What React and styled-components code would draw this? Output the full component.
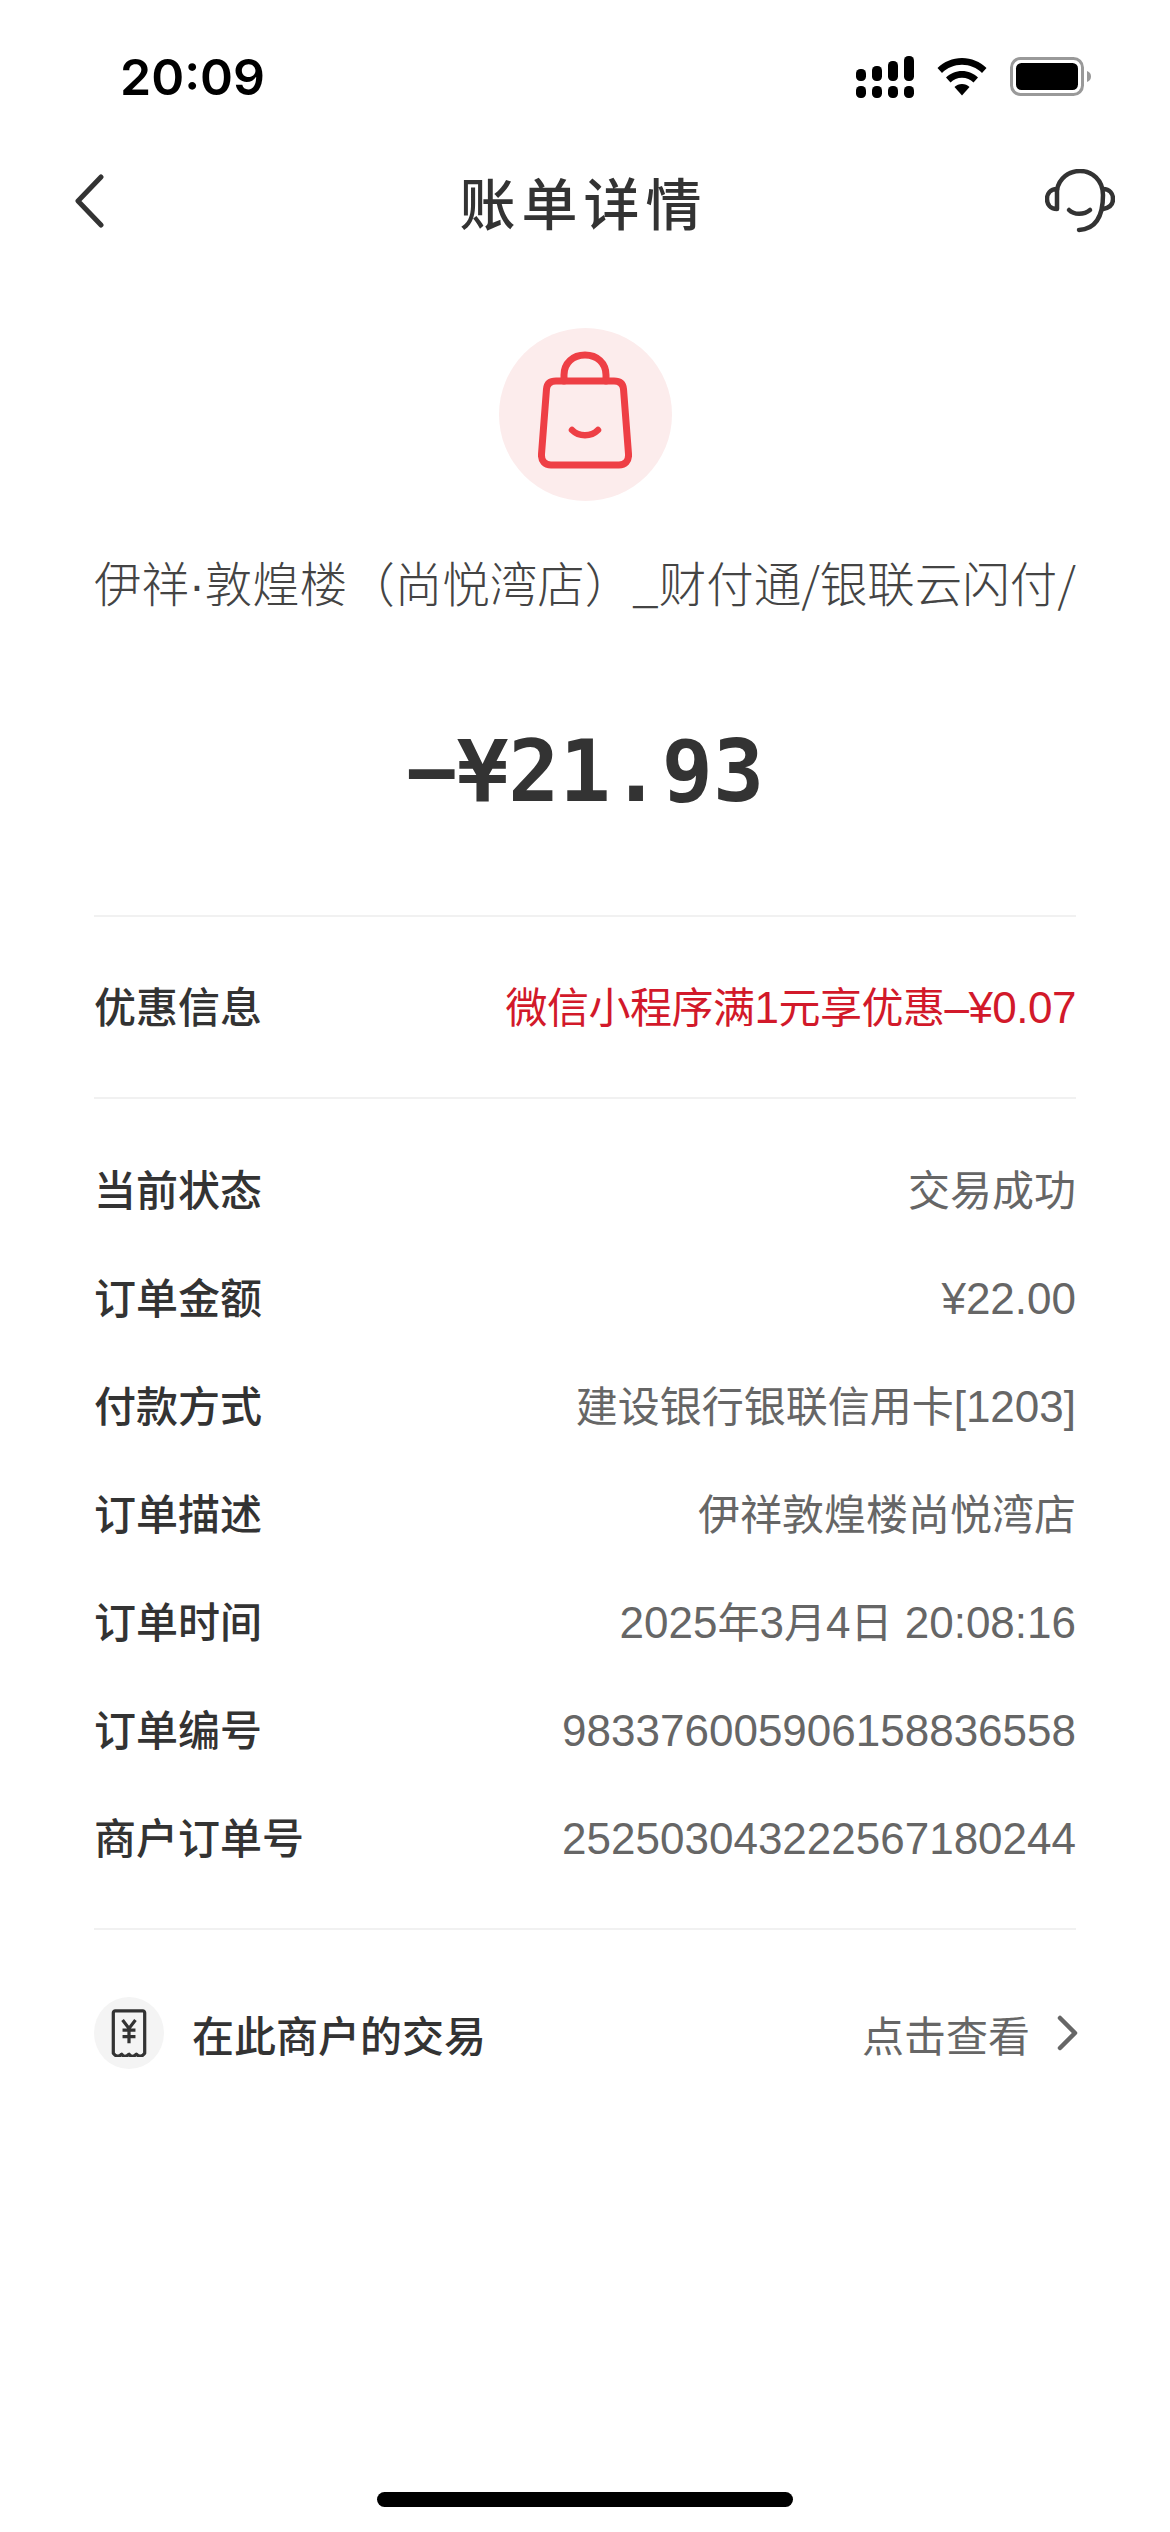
import React from "react";
import styled, { createGlobalStyle } from "styled-components";

const GlobalStyle = createGlobalStyle`
    html, body {
        margin: 0;
        padding: 0;
        background: #fff;
    }
    * {
        box-sizing: border-box;
    }
`;

const CJK = `"Noto Sans CJK SC", "Noto Sans", sans-serif`;

const Page = styled.div`
    width: 1170px;
    height: 2532px;
    background: #fff;
    font-family: ${CJK};
    color: #333;
    overflow: hidden;
    display: flex;
    flex-direction: column;
`;

const StatusBar = styled.div`
    height: 96px;
    padding: 58px 78px 0 120px;
    display: flex;
    align-items: center;
    justify-content: space-between;
`;

const Time = styled.span`
    font-family: Inter, "Liberation Sans", sans-serif;
    font-size: 50px;
    font-weight: 600;
    color: #000;
    line-height: 58px;
`;

const StatusIcons = styled.div`
    display: flex;
    align-items: center;
    gap: 23px;
`;

const NavBar = styled.div`
    height: 126px;
    margin-top: 42px;
    padding: 0 55px 0 74px;
    display: flex;
    align-items: center;
    justify-content: space-between;
`;

const NavTitle = styled.h1`
    margin: 0 0 0 18px;
    font-size: 56px;
    font-weight: 500;
    letter-spacing: 6px;
    line-height: 70px;
    color: #333;
`;

const Hero = styled.div`
    padding: 64px 94px 0;
    display: flex;
    flex-direction: column;
    align-items: center;
`;

const IconCircle = styled.div`
    width: 173px;
    height: 173px;
    padding-bottom: 9px;
    border-radius: 50%;
    background: #fcecec;
    display: flex;
    align-items: center;
    justify-content: center;
`;

const Merchant = styled.div`
    width: 100%;
    height: 72px;
    margin-top: 45px;
    font-size: 47.5px;
    font-weight: 200;
    line-height: 72px;
    color: #444;
    white-space: nowrap;
    overflow: hidden;
`;

const MerchantDot = styled.span`
    font-family: "Liberation Sans", sans-serif;
`;

const Amount = styled.div`
    margin-top: 104px;
    font-family: "DejaVu Sans Mono", monospace;
    font-size: 85px;
    font-weight: 700;
    line-height: 100px;
    color: #333;
`;

const Body = styled.div`
    padding: 0 94px 0;
`;

const Divider = styled.div`
    height: 2px;
    background: #f1f1f1;
    margin-top: ${p => p.$top}px;
`;

const Row = styled.div`
    height: 108px;
    margin-top: ${p => p.$top || 0}px;
    display: flex;
    align-items: center;
    justify-content: space-between;
    font-size: 42px;
    white-space: nowrap;
`;

const Label = styled.span`
    font-weight: 500;
    color: #333;
`;

const Value = styled.span`
    font-weight: 400;
    color: ${p => (p.$red ? "#d2192a" : "#666")};
    letter-spacing: ${p => (p.$red ? "-0.5px" : "0")};
`;

const Latin = styled.span`
    font-family: "Liberation Sans", sans-serif;
    font-size: 44px;
`;

const RowGroup = styled.div`
    padding-top: ${p => p.$top}px;
`;

const LinkRow = styled.div`
    margin-top: 67px;
    height: 72px;
    display: flex;
    align-items: center;
    justify-content: space-between;
    font-size: 42px;
`;

const LinkLeft = styled.div`
    display: flex;
    align-items: center;
    gap: 28px;
    font-weight: 500;
`;

const LinkRight = styled.div`
    display: flex;
    align-items: center;
    gap: 27px;
    margin-right: -3px;
    color: #666;
`;

const ReceiptBadge = styled.div`
    width: 70px;
    height: 72px;
    border-radius: 50%;
    background: #f4f4f4;
    display: flex;
    align-items: center;
    justify-content: center;
`;

const Spacer = styled.div`
    flex: 1;
`;

const HomeBar = styled.div`
    width: 416px;
    height: 15px;
    border-radius: 8px;
    background: #000;
    margin: 0 auto 25px;
`;

const SignalIcon = () => (
    <svg width="58" height="42" viewBox="0 0 58 42">
        <g fill="#000">
            <rect x="0" y="13" width="10" height="12" rx="4.5" />
            <rect x="16" y="10" width="10" height="15" rx="4.5" />
            <rect x="32" y="5" width="10" height="20" rx="4.5" />
            <rect x="48" y="0" width="10" height="25" rx="4.5" />
            <rect x="0" y="30" width="10" height="12" rx="4.5" />
            <rect x="16" y="30" width="10" height="12" rx="4.5" />
            <rect x="32" y="30" width="10" height="12" rx="4.5" />
            <rect x="48" y="30" width="10" height="12" rx="4.5" />
        </g>
    </svg>
);

const WifiIcon = () => (
    <svg width="50" height="38" viewBox="0 0 50 38">
        <path d="M25 0C15.500 0 7 3.700 0.500 10L5 15C10.300 9.800 17.300 6.800 25 6.800S39.700 9.800 45 15L49.500 10C43 3.700 34.500 0 25 0Z" fill="#000" />
        <path d="M25 13C18.800 13 13.300 15.400 9 19.500L13.500 24.500C16.500 21.600 20.500 19.800 25 19.800S33.500 21.600 36.500 24.500L41 19.500C36.700 15.400 31.200 13 25 13Z" fill="#000" />
        <path d="M25 26C22 26 19.500 27.100 17.500 29L25 37.500L32.500 29C30.500 27.100 28 26 25 26Z" fill="#000" />
    </svg>
);

const BatteryIcon = () => (
    <svg width="82" height="40" viewBox="0 0 82 40">
        <rect x="1.500" y="1.500" width="71" height="36" rx="9" fill="none" stroke="#999" strokeWidth="3" />
        <rect x="6" y="6" width="62" height="27" rx="5.500" fill="#000" />
        <path d="M77 14C80 15 81 17 81 19.500S80 24 77 25Z" fill="#999" />
    </svg>
);

const BackIcon = () => (
    <svg width="30" height="54" viewBox="0 0 30 54">
        <path d="M27 3L4 27L27 51" fill="none" stroke="#333" strokeWidth="5" strokeLinecap="round" strokeLinejoin="round" />
    </svg>
);

const HeadsetIcon = () => (
    <svg width="70" height="64" viewBox="0 0 70 64">
        <g fill="none" stroke="#333" strokeWidth="4.500" strokeLinecap="round" strokeLinejoin="round">
            <path d="M12 21C14 9 24 2 35 2C47 2 58 11 58 26C58 45 52 60 34 61" />
            <path d="M12 20C5 20 2 25 2 30C2 35 5 40 12 40Z" />
            <path d="M58 20C65 20 68 25 68 30C68 35 65 39 58 40" />
            <path d="M24 41C29 46 39 46 45 41" />
        </g>
    </svg>
);

const BagIcon = () => (
    <svg width="94" height="118" viewBox="0 0 94 118">
        <g fill="none" stroke="#ee3f45" strokeWidth="7" strokeLinecap="round" strokeLinejoin="round">
            <path d="M26 30V24C26 12 35 4 47 4S68 12 68 24V30" />
            <path d="M18 30H76C82 30 85 33 85.500 38L90.500 103C91 110 87 114 81 114H13C7 114 3 110 3.500 103L8.500 38C9 33 12 30 18 30Z" />
            <path d="M34 79C41 86 53 86 60 79" strokeWidth="6.500" />
        </g>
    </svg>
);

const ReceiptIcon = () => (
    <svg width="38" height="48" viewBox="0 0 40 52">
        <path d="M3 48V4C3 3 4 2 5 2H35C36 2 37 3 37 4V48C34 52 31 52 28 49C25 52 22 52 20 49C17 52 14 52 12 49C9 52 6 52 3 48Z" fill="none" stroke="#333" strokeWidth="3.500" strokeLinejoin="round" />
        <path d="M13 12L20 21L27 12M20 21V37M13 23H27M13 30H27" fill="none" stroke="#333" strokeWidth="3.500" />
    </svg>
);

const ChevronIcon = () => (
    <svg width="22" height="36" viewBox="0 0 22 36">
        <path d="M3 3L18 18L3 33" fill="none" stroke="#666" strokeWidth="4.500" strokeLinecap="round" strokeLinejoin="round" />
    </svg>
);

const details = [
    ["当前状态", "交易成功"],
    ["订单金额", "¥22.00"],
    ["付款方式", "建设银行银联信用卡[1203]"],
    ["订单描述", "伊祥敦煌楼尚悦湾店"],
    ["订单时间", "2025年3月4日 20:08:16"],
    ["订单编号", "983376005906158836558"],
    ["商户订单号", "252503043222567180244"],
];

// digits and symbols run slightly larger than the hanzi around them
const mixed = text =>
    text.split(/([0-9:.¥–\[\] ]+)/).map((part, idx) =>
        idx % 2 ? <Latin key={idx}>{part}</Latin> : part
    );

const App = () => (
    <Page>
        <GlobalStyle />
        <StatusBar>
            <Time>20:09</Time>
            <StatusIcons>
                <SignalIcon />
                <WifiIcon />
                <BatteryIcon />
            </StatusIcons>
        </StatusBar>
        <NavBar>
            <BackIcon />
            <NavTitle>账单详情</NavTitle>
            <HeadsetIcon />
        </NavBar>
        <Hero>
            <IconCircle>
                <BagIcon />
            </IconCircle>
            <Merchant>伊祥<MerchantDot>·</MerchantDot>敦煌楼（尚悦湾店）_财付通/银联云闪付/</Merchant>
            <Amount>−¥21.93</Amount>
        </Hero>
        <Body>
            <Divider $top={93} />
            <Row $top={33}>
                <Label>优惠信息</Label>
                <Value $red>{mixed("微信小程序满1元享优惠–¥0.07")}</Value>
            </Row>
            <Divider $top={39} />
            <RowGroup $top={34}>
                {details.map(([label, value]) => (
                    <Row key={label}>
                        <Label>{label}</Label>
                        <Value>{mixed(value)}</Value>
                    </Row>
                ))}
            </RowGroup>
            <Divider $top={39} />
            <LinkRow>
                <LinkLeft>
                    <ReceiptBadge>
                        <ReceiptIcon />
                    </ReceiptBadge>
                    在此商户的交易
                </LinkLeft>
                <LinkRight>
                    点击查看
                    <ChevronIcon />
                </LinkRight>
            </LinkRow>
        </Body>
        <Spacer />
        <HomeBar />
    </Page>
);

export default App;
